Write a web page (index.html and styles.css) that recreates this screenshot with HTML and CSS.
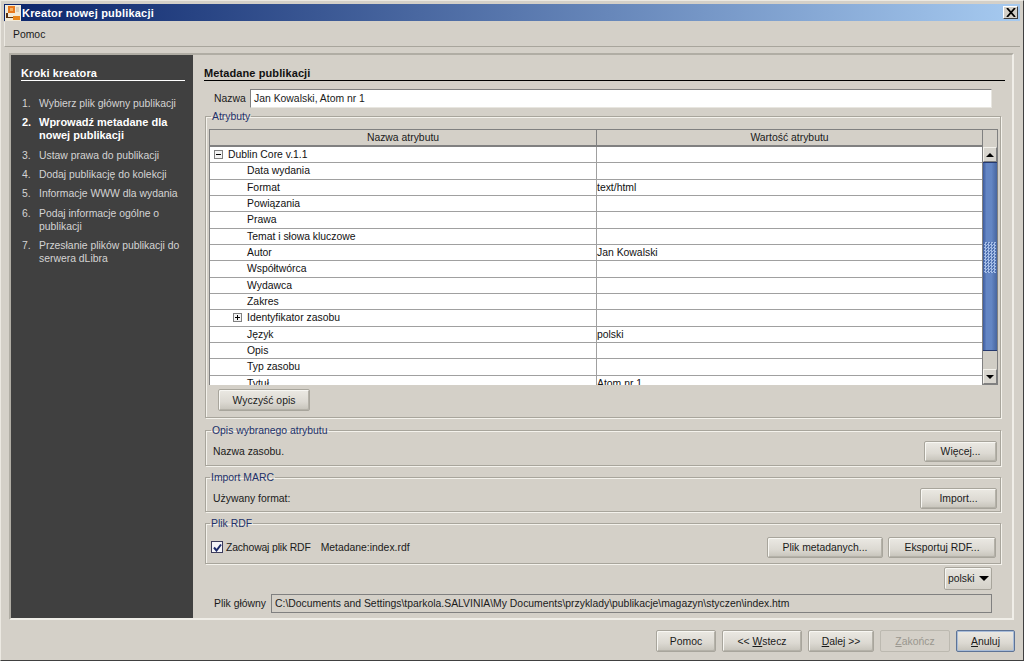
FILE: index.html
```html
<!DOCTYPE html>
<html lang="pl">
<head>
    <meta charset="UTF-8">
    <title>Kreator nowej publikacji</title>
    <link rel="stylesheet" href="styles.css">
</head>
<body>
<div class="window">
    <div class="titlebar">
        <svg class="app-icon" width="16" height="16" viewBox="0 0 16 16">
            <rect width="16" height="16" fill="#f2ead8"/>
            <rect x="3" y="1" width="7" height="7" fill="#e8781c"/>
            <rect x="5" y="3" width="3" height="3" fill="#f6b060"/>
            <rect x="1" y="8" width="2" height="5" fill="#5a3010"/>
            <rect x="3" y="12" width="5" height="1" fill="#5a3010"/>
            <rect x="8" y="11" width="7" height="4" fill="#e8861c"/>
            <rect x="11" y="2" width="3" height="5" fill="#d8d0c0"/>
        </svg>
        <span class="title-text">Kreator nowej publikacji</span>
        <button class="close-btn">
            <svg width="10" height="9" viewBox="0 0 10 9"><path d="M1 0l8 9M9 0L1 9" stroke="#000" stroke-width="1.8" fill="none"/></svg>
        </button>
    </div>

    <div class="menubar"><span>Pomoc</span></div>

    <div class="main">
        <div class="sidebar">
            <h3 class="side-title">Kroki kreatora</h3>
            <ol class="steps">
                <li><span class="num">1.</span><span>Wybierz plik główny publikacji</span></li>
                <li class="current"><span class="num">2.</span><span>Wprowadź metadane dla nowej publikacji</span></li>
                <li><span class="num">3.</span><span>Ustaw prawa do publikacji</span></li>
                <li><span class="num">4.</span><span>Dodaj publikację do kolekcji</span></li>
                <li><span class="num">5.</span><span>Informacje WWW dla wydania</span></li>
                <li><span class="num">6.</span><span>Podaj informacje ogólne o publikacji</span></li>
                <li><span class="num">7.</span><span>Przesłanie plików publikacji do serwera dLibra</span></li>
            </ol>
        </div>

        <div class="content">
            <h3 class="content-title">Metadane publikacji</h3>

            <div class="name-row">
                <label>Nazwa</label>
                <div class="input">Jan Kowalski, Atom nr 1</div>
            </div>

            <fieldset class="group attrs">
                <legend>Atrybuty</legend>
                <div class="table">
                    <div class="table-main">
                        <div class="thead">
                            <div class="th col-name">Nazwa atrybutu</div>
                            <div class="th col-value">Wartość atrybutu</div>
                        </div>
                        <div class="tbody">
                            <div class="tr"><div class="td col-name lvl0"><span class="toggle minus"></span>Dublin Core v.1.1</div><div class="td col-value"></div></div>
                            <div class="tr"><div class="td col-name lvl1">Data wydania</div><div class="td col-value"></div></div>
                            <div class="tr"><div class="td col-name lvl1">Format</div><div class="td col-value">text/html</div></div>
                            <div class="tr"><div class="td col-name lvl1">Powiązania</div><div class="td col-value"></div></div>
                            <div class="tr"><div class="td col-name lvl1">Prawa</div><div class="td col-value"></div></div>
                            <div class="tr"><div class="td col-name lvl1">Temat i słowa kluczowe</div><div class="td col-value"></div></div>
                            <div class="tr"><div class="td col-name lvl1">Autor</div><div class="td col-value">Jan Kowalski</div></div>
                            <div class="tr"><div class="td col-name lvl1">Współtwórca</div><div class="td col-value"></div></div>
                            <div class="tr"><div class="td col-name lvl1">Wydawca</div><div class="td col-value"></div></div>
                            <div class="tr"><div class="td col-name lvl1">Zakres</div><div class="td col-value"></div></div>
                            <div class="tr"><div class="td col-name lvl1 has-toggle"><span class="toggle plus"></span>Identyfikator zasobu</div><div class="td col-value"></div></div>
                            <div class="tr"><div class="td col-name lvl1">Język</div><div class="td col-value">polski</div></div>
                            <div class="tr"><div class="td col-name lvl1">Opis</div><div class="td col-value"></div></div>
                            <div class="tr"><div class="td col-name lvl1">Typ zasobu</div><div class="td col-value"></div></div>
                            <div class="tr"><div class="td col-name lvl1">Tytuł</div><div class="td col-value">Atom nr 1</div></div>
                        </div>
                    </div>
                    <div class="scrollbar">
                        <div class="sb-corner"></div>
                        <div class="sb-btn"><span class="arrow-up"></span></div>
                        <div class="sb-track">
                            <div class="sb-thumb"><div class="sb-grip"></div></div>
                        </div>
                        <div class="sb-btn"><span class="arrow-down"></span></div>
                    </div>
                </div>
                <button class="btn clear-btn">Wyczyść opis</button>
            </fieldset>

            <fieldset class="group desc">
                <legend>Opis wybranego atrybutu</legend>
                <div class="group-row">
                    <span>Nazwa zasobu.</span>
                    <button class="btn more-btn">Więcej...</button>
                </div>
            </fieldset>

            <fieldset class="group marc">
                <legend>Import MARC</legend>
                <div class="group-row">
                    <span>Używany format:</span>
                    <button class="btn import-btn">Import...</button>
                </div>
            </fieldset>

            <fieldset class="group rdf">
                <legend>Plik RDF</legend>
                <div class="group-row">
                    <span class="check-wrap">
                        <span class="checkbox">
                            <svg width="9" height="9" viewBox="0 0 9 9"><path d="M1 4.5l2.5 3L8 1.5" stroke="#1c2a6a" stroke-width="2" fill="none"/></svg>
                        </span>
                        Zachowaj plik RDF
                    </span>
                    <span class="rdf-name">Metadane:index.rdf</span>
                    <span class="spacer"></span>
                    <button class="btn meta-btn">Plik metadanych...</button>
                    <button class="btn export-btn">Eksportuj RDF...</button>
                </div>
            </fieldset>

            <div class="lang-row">
                <div class="combo">polski<span class="arrow-down"></span></div>
            </div>

            <div class="file-row">
                <label>Plik główny</label>
                <div class="input readonly">C:\Documents and Settings\tparkola.SALVINIA\My Documents\przyklady\publikacje\magazyn\styczen\index.htm</div>
            </div>
        </div>
    </div>

    <div class="footer">
        <button class="btn foot-btn">Pomoc</button>
        <button class="btn foot-btn">&lt;&lt; <u>W</u>stecz</button>
        <button class="btn foot-btn"><u>D</u>alej &gt;&gt;</button>
        <button class="btn foot-btn disabled"><u>Z</u>akończ</button>
        <button class="btn foot-btn focused"><u>A</u>nuluj</button>
    </div>
</div>
</body>
</html>
```

FILE: styles.css
```css
* {
    box-sizing: border-box;
}

html, body {
    margin: 0;
    padding: 0;
}

body {
    width: 1024px;
    height: 661px;
    overflow: hidden;
    font-family: "Liberation Sans", Arial, sans-serif;
    font-size: 10.4px;
    color: #1a1a1a;
    background-color: #d4d0c8;
}

.window {
    width: 1024px;
    height: 661px;
    padding: 3px;
    display: flex;
    flex-direction: column;
    background-color: #d4d0c8;
    border: 1px solid;
    border-color: #ece9e2 #404040 #404040 #ece9e2;
}

/* title bar */
.titlebar {
    height: 17px;
    flex: none;
    display: flex;
    align-items: center;
    padding: 0 2px 0 1px;
    background: linear-gradient(to right, #0a246a, #a6caf0);
}

.app-icon {
    flex: none;
}

.title-text {
    margin-left: 1px;
    flex: 1;
    color: #fff;
    font-weight: bold;
    font-size: 11px;
    letter-spacing: 0.2px;
}

.close-btn {
    width: 15px;
    height: 13px;
    padding: 0;
    display: flex;
    align-items: center;
    justify-content: center;
    background-color: #d4d0c8;
    border: 1px solid;
    border-color: #fff #404040 #404040 #fff;
}

.menubar {
    height: 25px;
    flex: none;
    padding: 7px 8px 0;
    margin-top: 1px;
    border-bottom: 1px solid #a8a59c;
    border-left: 1px solid #ece9e2;
}

/* main panel */
.main {
    height: 567px;
    flex: none;
    margin: 6px 6px 0 5px;
    display: flex;
    border: 2px solid;
    border-color: #b0ada4 #f0eee8 #f0eee8 #b0ada4;
}

.sidebar {
    width: 182px;
    flex: none;
    padding: 12px 8px 0 10px;
    background-color: #404040;
    color: #d4d4d4;
}

.side-title {
    margin: 0 0 16px;
    height: 13px;
    box-sizing: content-box;
    line-height: 13px;
    font-size: 11px;
    letter-spacing: 0.1px;
    color: #fff;
    border-bottom: 1px solid #fff;
}

.steps {
    list-style: none;
    margin: 0;
    padding: 0;
    display: flex;
    flex-direction: column;
    gap: 6px;
    line-height: 13px;
}

.steps li {
    display: flex;
    padding-left: 1px;
}

.steps li:nth-child(3),
.steps li:nth-child(6) {
    margin-top: 1px;
}

.steps .num {
    width: 17px;
    flex: none;
}

.steps .current {
    color: #fff;
    font-weight: bold;
    font-size: 11px;
}

/* right side */
.content {
    flex: 1;
    min-width: 0;
    padding: 12px 7px 0 11px;
}

.content-title {
    margin: 0;
    height: 13px;
    box-sizing: content-box;
    line-height: 13px;
    font-size: 11px;
    letter-spacing: 0.1px;
    color: #111;
    border-bottom: 1px solid #000;
}

.name-row,
.file-row {
    display: flex;
    align-items: center;
    margin: 8px 13px 0 10px;
    gap: 5px;
}

.name-row label {
    width: 31px;
    flex: none;
}

.file-row label {
    width: 52px;
    flex: none;
}

.input {
    flex: 1;
    height: 19px;
    line-height: 17px;
    padding-left: 3px;
    background-color: #fff;
    border: 1px solid;
    border-color: #808080 #e8e6e0 #e8e6e0 #808080;
    white-space: nowrap;
    overflow: hidden;
}

.input.readonly {
    background-color: #d4d0c8;
    border-color: #808080;
}

.group {
    margin: 0 4px 0 1px;
    padding: 0;
    min-width: 0;
    border: 1px solid #a8a59c;
    box-shadow: 1px 1px 0 #f4f2ec, inset 1px 1px 0 #f4f2ec;
}

.group legend {
    margin-left: 5px;
    padding: 0 1px;
    color: #22306a;
    line-height: 11px;
}

.attrs {
    margin-top: 3px;
    height: 307px;
    padding: 0 2px 0 3px;
}

.attrs legend {
    margin-left: 2px;
}

.desc {
    margin-top: 7px;
    height: 41px;
}

.marc {
    margin-top: 6px;
    height: 40px;
}

.marc legend,
.rdf legend {
    margin-left: 4px;
}

.rdf {
    margin-top: 6px;
    height: 46px;
}

.group-row {
    display: flex;
    align-items: center;
    justify-content: space-between;
    height: 22px;
    margin-top: 4px;
    padding: 0 3px 0 7px;
}

.rdf .group-row {
    margin-top: 7px;
}

/* table */
.table {
    height: 256px;
    margin-top: 7px;
    display: flex;
    border: 1px solid #808080;
    border-bottom: 0;
    overflow: hidden;
}

.table-main {
    flex: 1;
    min-width: 0;
}

.thead {
    height: 17px;
    display: flex;
    border-bottom: 2px solid #808080;
}

.th {
    text-align: center;
    line-height: 15px;
    background-color: #d4d0c8;
}

.th.col-name {
    border-right: 1px solid #808080;
}

.col-name {
    width: 387px;
    flex: none;
}

.col-value {
    flex: 1;
    min-width: 0;
}

.tr {
    height: 16.33px;
    display: flex;
    border-bottom: 1px solid #a0a0a0;
    background-color: #fff;
}

.td {
    line-height: 15px;
    color: #111;
    white-space: nowrap;
}

.td.col-name {
    border-right: 1px solid #a0a0a0;
}

.lvl0 {
    padding-left: 18px;
    position: relative;
}

.lvl1 {
    padding-left: 37px;
    position: relative;
}

.toggle {
    position: absolute;
    top: 3px;
    width: 9px;
    height: 9px;
    background-color: #f4f4f4;
    border: 1px solid #808080;
}

.lvl0 .toggle {
    left: 4px;
}

.has-toggle .toggle {
    left: 23px;
}

.toggle::before {
    content: "";
    position: absolute;
    left: 1px;
    top: 3px;
    width: 5px;
    height: 1px;
    background-color: #000;
}

.toggle.plus::after {
    content: "";
    position: absolute;
    left: 3px;
    top: 1px;
    width: 1px;
    height: 5px;
    background-color: #000;
}

/* scrollbar */
.scrollbar {
    width: 15px;
    flex: none;
    display: flex;
    flex-direction: column;
    border-left: 1px solid #808080;
    border-bottom: 1px solid #808080;
}

.sb-corner {
    height: 17px;
    flex: none;
    background-color: #d4d0c8;
}

.sb-btn {
    height: 15px;
    flex: none;
    display: flex;
    align-items: center;
    justify-content: center;
    background-color: #d8d5ce;
    border: 1px solid;
    border-color: #f4f2ec #808080 #808080 #f4f2ec;
}

.sb-track {
    flex: 1;
    background-color: #d0cdc5;
}

.sb-thumb {
    height: 189px;
    padding-top: 79px;
    background: linear-gradient(to right, #3e5c9e, #6486c4 25%, #6486c4 60%, #48669f);
    border-top: 1px solid #24386e;
    border-bottom: 1px solid #24386e;
}

.sb-grip {
    height: 31px;
    margin: 0 1px;
    background-color: #4e70b0;
    background-image: conic-gradient(#a4bce6 25%, transparent 0 50%, #a4bce6 0 75%, transparent 0);
    background-size: 3px 3px;
}

.arrow-up,
.arrow-down {
    width: 0;
    height: 0;
    border-left: 4px solid transparent;
    border-right: 4px solid transparent;
}

.arrow-up {
    border-bottom: 4px solid #000;
}

.arrow-down {
    border-top: 4px solid #000;
}

/* buttons */
.btn {
    padding: 0;
    font-family: inherit;
    font-size: 10.4px;
    color: #1a1a1a;
    border: 1px solid #a8a59c;
    border-radius: 2px;
    background: linear-gradient(to bottom, #ebe9e3, #dcd9d2 60%, #c6c3ba);
    box-shadow: inset 1px 1px 0 #f8f7f3, inset -1px -1px 0 #b4b1a8;
}

.clear-btn {
    display: block;
    width: 92px;
    height: 22px;
    margin: 4px 0 0 9px;
}

.more-btn {
    width: 73px;
    height: 21px;
}

.import-btn {
    width: 77px;
    height: 21px;
}

.meta-btn {
    width: 116px;
    height: 21px;
    margin-right: 5px;
}

.export-btn {
    width: 108px;
    height: 21px;
    margin-right: 1px;
}

.check-wrap {
    display: flex;
    align-items: center;
    gap: 3px;
    margin-left: -2px;
    letter-spacing: -0.15px;
}

.checkbox {
    width: 12px;
    height: 12px;
    display: flex;
    align-items: center;
    justify-content: center;
    background-color: #f4f4f8;
    border: 1px solid #3c3c5c;
}

.rdf-name {
    margin-left: 10px;
}

.spacer {
    flex: 1;
}

.lang-row {
    display: flex;
    justify-content: flex-end;
    margin: 3px 13px 0 0;
}

.combo {
    width: 48px;
    height: 23px;
    padding: 0 2px 0 3px;
    display: flex;
    align-items: center;
    justify-content: space-between;
    border: 1px solid #a8a59c;
    border-radius: 2px;
    background: linear-gradient(to bottom, #e8e6e0, #d4d1c9);
    box-shadow: inset 1px 1px 0 #f8f7f3;
}

.combo .arrow-down {
    border-left-width: 5px;
    border-right-width: 5px;
    border-top-width: 5px;
}

.file-row {
    margin-top: 4px;
}

/* bottom buttons */
.footer {
    flex: 1;
    display: flex;
    justify-content: flex-end;
    align-items: flex-start;
    gap: 6px;
    padding: 10px 5px 0 0;
}

.foot-btn {
    width: 60px;
    height: 22px;
}

.foot-btn:nth-child(2) {
    width: 80px;
}

.foot-btn:nth-child(3) {
    width: 66px;
}

.foot-btn:nth-child(4) {
    width: 70px;
}

.foot-btn:nth-child(5) {
    width: 59px;
}

.foot-btn.disabled {
    color: #9a978f;
    background: #d4d0c8;
    box-shadow: none;
    border-color: #bcb9b0;
}

.foot-btn.focused {
    border-color: #5d7396;
    box-shadow: inset 0 0 0 1px #a8bcd8;
}
```
